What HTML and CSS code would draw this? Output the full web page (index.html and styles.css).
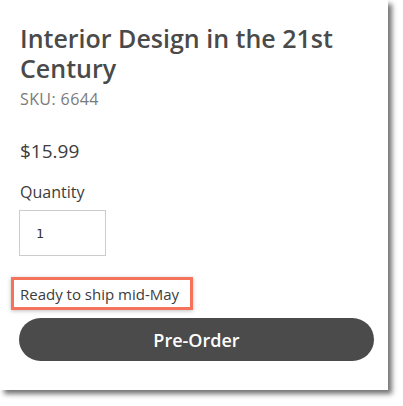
FILE: index.html
```html
<!DOCTYPE html>
<html>
<head>
<meta charset="utf-8">
<link rel="stylesheet" href="styles.css">
</head>
<body>
<div class="card">
  <h1 class="title">Interior Design in the 21st Century</h1>
  <div class="sku">SKU: 6644</div>
  <div class="price">$15.99</div>
  <div class="qty-label">Quantity</div>
  <div class="qty-box"><span class="qty-val">1</span></div>
  <div class="ship-wrap"><span class="ship">Ready to ship mid-May</span></div>
  <button class="preorder">Pre-Order</button>
</div>
</body>
</html>
```
FILE: styles.css
```css
html, body {
  margin: 0;
  padding: 0;
  background: #ffffff;
}
body {
  width: 403px;
  height: 406px;
  overflow: hidden;
  font-family: "Open Sans", "Lato", sans-serif;
  color: #4a4a4a;
}
.card {
  width: 388px;
  height: 390px;
  background: #ffffff;
  box-shadow: 4px 4px 5px rgba(0, 0, 0, 0.55);
  box-sizing: border-box;
  padding: 23px 0 0 20px;
  display: flex;
  flex-direction: column;
  align-items: flex-start;
}
.title {
  margin: 0;
  font-size: 25px;
  line-height: 30px;
  font-weight: 600;
  color: #4a4a4a;
  width: 340px;
}
.sku {
  margin-top: 6px;
  font-size: 16px;
  line-height: 20px;
  font-weight: 500;
  letter-spacing: 0.4px;
  color: #7a7a7a;
}
.price {
  margin-top: 30px;
  font-size: 19px;
  line-height: 24px;
  color: #3c3c3c;
}
.qty-label {
  margin-top: 19px;
  font-size: 16px;
  line-height: 20px;
  color: #3c3c3c;
}
.qty-box {
  margin-top: 8px;
  margin-left: -1px;
  width: 87px;
  height: 46px;
  box-sizing: border-box;
  border: 1px solid #cccccc;
  display: flex;
  align-items: center;
  padding-left: 16px;
}
.qty-val {
  font-family: "DejaVu Sans Mono", monospace;
  font-size: 13px;
  color: #333333;
}
.ship-wrap {
  margin-top: 21px;
  margin-left: -9px;
  border: 3px solid #f4735a;
  box-shadow: 0 1px 4px rgba(0, 0, 0, 0.25);
  padding: 3px 11px 2px 6px;
}
.ship {
  font-size: 15px;
  line-height: 20px;
  color: #3c3c3c;
}
.preorder {
  margin-top: 8px;
  margin-left: -1px;
  width: 355px;
  height: 43px;
  border: none;
  border-radius: 22px;
  background: #4b4b4b;
  color: #ffffff;
  font-family: "Open Sans", "Lato", sans-serif;
  font-size: 18px;
  font-weight: 600;
  padding: 0;
}
```
